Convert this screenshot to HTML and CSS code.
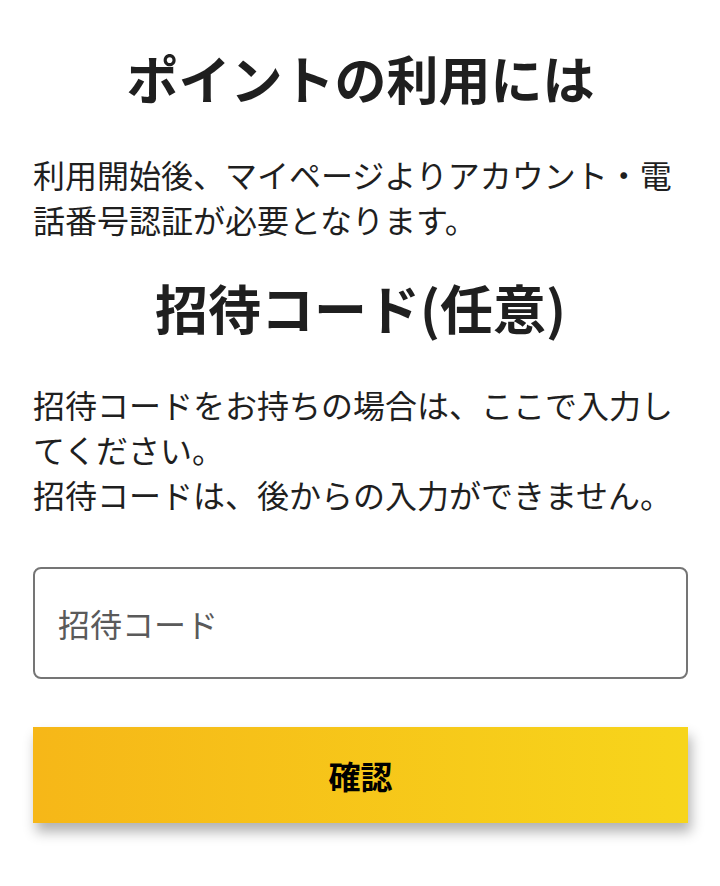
FILE: index.html
```html
<!DOCTYPE html>
<html lang="ja">
<head>
<meta charset="utf-8">
<link rel="stylesheet" href="styles.css">
</head>
<body>
<main class="page">
  <h1 class="title title-first">ポイントの利用には</h1>
  <p class="text text-first">利用開始後、マイページよりアカウント・電話番号認証が必要となります。</p>
  <h1 class="title title-second">招待コード(任意)</h1>
  <p class="text">招待コードをお持ちの場合は、ここで入力してください。<br>招待コードは、後からの入力ができません。</p>
  <input class="code-input" type="text" placeholder="招待コード">
  <button class="confirm" type="button">確認</button>
</main>
</body>
</html>
```

FILE: styles.css
```css
html, body {
  margin: 0;
  padding: 0;
  background: #ffffff;
}
.page {
  box-sizing: border-box;
  width: 720px;
  padding: 43px 32px 40px 33px;
  display: flex;
  flex-direction: column;
  font-family: "Noto Sans CJK JP", "Noto Sans", sans-serif;
  color: #1f1f1f;
}
.title {
  margin: 0;
  font-size: 52px;
  line-height: 70px;
  font-weight: 700;
  text-align: center;
}
.title-first {
  margin-bottom: 39px;
}
.title-second {
  margin-bottom: 40px;
  font-size: 53px;
}
.text {
  margin: 0 0 35px;
  font-size: 32px;
  line-height: 45px;
  font-weight: 400;
}
.text-first {
  margin-bottom: 30px;
}
.code-input {
  box-sizing: border-box;
  margin-top: 15px;
  height: 112px;
  width: 100%;
  border: 2px solid #757575;
  border-radius: 8px;
  padding: 0 23px;
  font-family: "Noto Sans CJK JP", "Noto Sans", sans-serif;
  font-size: 32px;
  color: #1f1f1f;
  background: #fff;
  outline: none;
}
.code-input::placeholder {
  color: #5a5a5a;
}
.confirm {
  margin-top: 48px;
  height: 96px;
  width: 100%;
  border: none;
  border-radius: 0;
  background: linear-gradient(90deg, #f6b718 0%, #f7d51b 100%);
  box-shadow: 3px 9px 12px rgba(0, 0, 0, 0.3);
  font-family: "Noto Sans CJK JP", "Noto Sans", sans-serif;
  font-size: 32px;
  font-weight: 700;
  color: #000;
}
```
